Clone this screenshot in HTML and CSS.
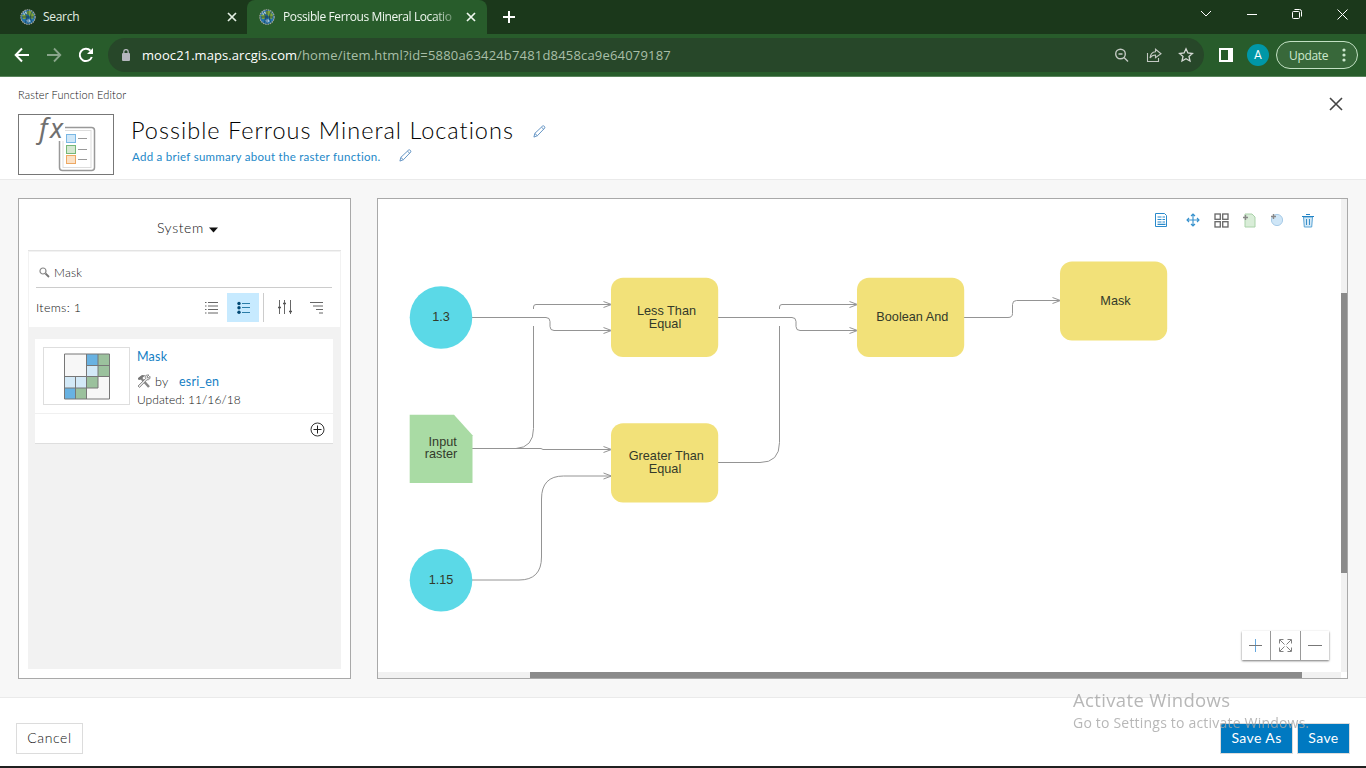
FILE: index.html
```html
<!DOCTYPE html>
<html lang="en">
<head>
<meta charset="utf-8">
<title>Possible Ferrous Mineral Locations</title>
<link rel="stylesheet" href="styles.css">
</head>
<body>
<svg class="defs" width="0" height="0">
  <symbol id="globe" viewBox="0 0 16 16">
    <circle cx="8" cy="8" r="7.2" fill="#2474ad" stroke="#a9a9a3" stroke-width="1.1" stroke-dasharray="1.6 .7"/>
    <path d="M7 2l4 0 3 4-1 4-3-1-1-3-3-1zM2 6l3-1 2 3-2 2-2 0z" fill="#7fa43a"/>
    <path d="M3 3.5l3-1 1 2-3 1.500zM6 11l3-1 2 2-3 2z" fill="#a5cbe4"/>
    <path d="M2 8h12M8 1v14M4 3c3 3 3 8 1 11M12 3c-2 3-2 8 0 10" stroke="#16384c" stroke-width=".7" fill="none"/>
  </symbol>
  <symbol id="cross" viewBox="0 0 10 10"><path d="M1 1l8 8M9 1l-8 8" stroke="currentColor" stroke-width="1.700" fill="none"/></symbol>
  <symbol id="pencil" viewBox="0 0 14 14"><path d="M1 13l1-4L10.500 1c1-.6 2.800 1 2.200 2.200L4.800 11.500zM2 9.200l2.700 2.300M9.200 2.400l2.500 2.400" fill="none" stroke="#5b8ec0" stroke-width="1"/></symbol>
</svg>

<header class="tabs">
  <div class="tab tab-search"><svg class="globe"><use href="#globe"/></svg><span class="tab-title w-search">Search</span><svg class="tab-close"><use href="#cross"/></svg></div>
  <div class="tab tab-active"><svg class="globe"><use href="#globe"/></svg><span class="tab-title fade">Possible Ferrous Mineral Locatio</span><svg class="tab-close"><use href="#cross"/></svg></div>
  <svg class="new-tab" viewBox="0 0 12 12"><path d="M6 0v12M0 6h12" stroke="#fff" stroke-width="2"/></svg>
  <div class="window-buttons">
    <svg width="12" height="8" viewBox="0 0 12 8"><path d="M1 1l5 5 5-5" fill="none" stroke="#fff"/></svg>
    <svg width="10" height="10" viewBox="0 0 10 10"><path d="M0 5.500h10" stroke="#fff"/></svg>
    <svg width="10" height="10" viewBox="0 0 10 10"><rect x=".5" y="2.500" width="7" height="7" rx="1" fill="none" stroke="#fff"/><path d="M2.500.5h5a2 2 0 0 1 2 2v5" fill="none" stroke="#fff"/></svg>
    <svg width="11" height="11" viewBox="0 0 11 11"><path d="M.5.5l10 10M10.500.5l-10 10" stroke="#fff"/></svg>
  </div>
</header>

<nav class="toolbar">
  <svg class="nav-icon" viewBox="0 0 16 16"><path d="M15 8H2M8 1.500L1.700 8 8 14.500" fill="none" stroke="#fff" stroke-width="2"/></svg>
  <svg class="nav-icon dim" viewBox="0 0 16 16"><path d="M1 8h13M8 1.500L14.300 8 8 14.500" fill="none" stroke="#fff" stroke-width="1.800"/></svg>
  <svg class="nav-icon" viewBox="0 0 16 16"><path d="M13.800 10A6.200 6.200 0 1 1 12.500 3.600" fill="none" stroke="#fff" stroke-width="2"/><path d="M15 1v6H9z" fill="#fff"/></svg>
  <div class="address">
    <svg class="lock" viewBox="0 0 10 12"><rect x="1" y="4" width="8" height="8" rx="1" fill="#b5b7bd"/><path d="M2.800 4V2.800a2.200 2.200 0 0 1 4.400 0V4" fill="none" stroke="#b5b7bd" stroke-width="1.300"/></svg>
    <div class="url"><span class="host">mooc21.maps.arcgis.com</span><span class="path">/home/item.html?id=5880a63424b7481d8458ca9e64079187</span></div>
    <div class="address-icons">
      <svg width="16" height="16" viewBox="0 0 16 16"><g fill="none" stroke="#c3c9c3" stroke-width="1.400"><circle cx="6.500" cy="7" r="4.800"/><path d="M10 10.500l4 4M4.500 7h4"/></g></svg>
      <svg width="16" height="16" viewBox="0 0 16 16"><path d="M1.500 6v8.500h11V11M9.500 2.200L15 6.700l-5.500 4V8C7 8 5.200 9 4 11c.3-3.800 2.200-6 5.500-6.300z" fill="none" stroke="#c3c9c3" stroke-width="1.100"/></svg>
      <svg width="16" height="16" viewBox="0 0 16 16"><path d="M8 1.800l1.900 4.200 4.500.5-3.400 3 1 4.500L8 11.700 4 14l1-4.500-3.400-3L6.100 6z" fill="none" stroke="#d5d9d5" stroke-width="1.300"/></svg>
    </div>
  </div>
  <svg class="side-icon" viewBox="0 0 14 14"><path d="M0 0h14v14H0zM2 2v10h7V2z" fill="#fff" fill-rule="evenodd"/></svg>
  <div class="avatar">A</div>
  <div class="update"><span>Update</span><svg width="4" height="14" viewBox="0 0 4 14"><g fill="#cde8ce"><circle cx="2" cy="2" r="1.600"/><circle cx="2" cy="7" r="1.600"/><circle cx="2" cy="12" r="1.600"/></g></svg></div>
</nav>

<section class="item-header">
  <div class="item-main">
    <div class="crumb"><span>Raster Function Editor</span></div>
    <div class="item-row">
      <div class="thumb">
        <svg class="thumb-art" width="94" height="59" viewBox="0 0 94 59">
          <rect x="40.500" y="12.500" width="35" height="43" rx="3" fill="#fff" stroke="#999" stroke-width="1.500"/>
          <rect x="44" y="15.500" width="28" height="37" fill="#fff" stroke="#ddd"/>
          <path d="M18 0h28v26H18z" fill="#fff"/>
          <text class="fx" x="20" y="23">f<tspan x="31">x</tspan></text>
          <rect x="47.500" y="19.500" width="9" height="8" fill="#cfe7f8" stroke="#79b7e4"/>
          <rect x="47.500" y="30.500" width="9" height="8" fill="#d4e8d1" stroke="#76b777"/>
          <rect x="47.500" y="40.500" width="9" height="8" fill="#fbe1c5" stroke="#eda863"/>
          <path d="M59 23.500h9M59 34.500h9M59 44.500h9" stroke="#999"/>
        </svg>
      </div>
      <div class="item-text">
        <div class="title-row"><h1><span>Possible Ferrous Mineral Locations</span></h1><svg class="pencil"><use href="#pencil"/></svg></div>
        <div class="summary-row"><a>Add a brief summary about the raster function.</a><svg class="pencil"><use href="#pencil"/></svg></div>
      </div>
    </div>
  </div>
  <svg class="close-item" viewBox="0 0 14 14"><path d="M1 1l12 12M13 1L1 13" stroke="#444" stroke-width="1.600"/></svg>
</section>

<main class="workspace">
  <aside class="panel">
    <div class="source"><span>System</span><svg width="9" height="6" viewBox="0 0 9 6"><path d="M0 .5h9L4.500 5.500z" fill="#111"/></svg></div>
    <div class="browser">
      <div class="filters">
        <div class="search"><svg width="11" height="11" viewBox="0 0 11 11"><circle cx="4" cy="4" r="3" fill="none" stroke="#888" stroke-width="1.200"/><path d="M6.500 6.500l3.500 3.500" stroke="#777" stroke-width="1.800"/></svg><span>Mask</span></div>
        <div class="tools">
          <span class="count">Items: 1</span>
          <svg class="list-icon" width="13" height="13" viewBox="0 0 13 13"><path d="M0 1.500h1.500M3 1.500h10M0 5h1.500M3 5h10M0 8.500h1.500M3 8.500h10M0 12h1.500M3 12h10" stroke="#666" stroke-width="1.100"/></svg>
          <div class="view-on"><svg width="13" height="13" viewBox="0 0 13 13"><path d="M5 2.500h8M5 6.500h8M5 11.500h8" stroke="#2b7da8"/><g fill="#004874"><circle cx="2" cy="2.500" r="1.700"/><circle cx="2" cy="6.800" r="1.700"/><circle cx="2" cy="11.300" r="1.700"/></g></svg></div>
          <div class="sorting">
            <svg width="14" height="14" viewBox="0 0 14 14"><path d="M1.500 0v14M6.500 0v14M12.500 0v14" stroke="#666"/><path d="M0 7.500h3M5 3.500h3M11 11.500h3" stroke="#555" stroke-width="1.500"/></svg>
            <svg width="13" height="13" viewBox="0 0 13 13"><path d="M0 1.500h13M3 5h10M6 8.500h7M9 12h4" stroke="#666" stroke-width="1.100"/></svg>
          </div>
        </div>
      </div>
      <article class="card">
        <div class="card-body">
          <div class="card-thumb">
            <svg width="46" height="47" viewBox="0 0 46 47">
              <path d="M.5 1h45v45H.5z" fill="#f7f7f7"/><path d="M23 1h11v11H23zM1 35h11v11H1z" fill="#68b2e2"/><path d="M34 1h11v22H34zM23 23h11v12H23zM12 35h11v11H12z" fill="#9bc19d"/><path d="M23 12h11v11H23zM1 23h22v12H1z" fill="#d3e9f7"/>
              <path d="M.5 1h45v45H.5zM22.500 1v45M34 1v34M11.500 23.500V46M22.500 12.500h23M.5 23.500h45M.5 35H34" fill="none" stroke="#777"/>
            </svg>
          </div>
          <div class="card-text">
            <a class="c1">Mask</a>
            <div class="by-row"><svg width="14" height="14" viewBox="0 0 14 14"><path d="M3 3l9 10" stroke="#888" stroke-width="2.500"/><path d="M1 4l4-3 4 .5-2 1L3 6 1 5.500z" fill="#777"/><path d="M12 1c-4-.5-4 2-3.500 3.500L1 12l1.500 1.500L10 5.800c2 .3 3.500-1 3-3.500L11 4.200 10 3z" fill="#e4e4e4" stroke="#777" stroke-width=".8"/></svg><span class="by">by</span><a class="author">esri_en</a></div>
            <span class="updated">Updated: 11/16/18</span>
          </div>
        </div>
        <div class="card-foot"><svg width="15" height="15" viewBox="0 0 15 15"><circle cx="7.500" cy="7.500" r="6.500" fill="none" stroke="#333"/><path d="M7.500 3.500v8M3.500 7.500h8" stroke="#222"/></svg></div>
      </article>
    </div>
  </aside>

  <section class="canvas">
    <div class="stage">
      <svg class="diagram" width="963" height="473" viewBox="378 199 963 473">
        <g class="links">
          <path d="M472 317.500h74q4 0 4 4v5q0 4 4 4h56"/>
          <path d="M533.500 309v-2q0-2.500 2.500-2.500h74"/>
          <path d="M472 448.500h44q17.500-1 17.500-20V326"/>
          <path d="M472 448.500h69l2 1h67"/>
          <path d="M472 580h47q22.500 0 22.500-23v-58q0-23 22-23h47"/>
          <path d="M718 317.500h74q4 0 4 4v5q0 4 4 4h56"/>
          <path d="M779.500 309v-2q0-2.500 2.500-2.500h74"/>
          <path d="M718 462.500h42q19.500 0 19.500-20V326"/>
          <path d="M964 317.500h44q4.500 0 4.500-4v-9q0-4 4-4h43"/>
          <path d="M603.500 301.500l8 3-8 3M603.500 327.500l8 3-8 3M603.500 446.500l8 3-8 3M603.500 473l8 3-8 3M849.500 301.500l8 3-8 3M849.500 327.500l8 3-8 3M1052.500 297.500l8 3-8 3"/>
        </g>
        <circle cx="441" cy="317.500" r="31.300" fill="#5bd9e7"/><circle cx="441" cy="580.300" r="31.300" fill="#5bd9e7"/>
        <path d="M409.700 414.700h44.300l18.500 20.500v47.800h-62.800z" fill="#a9dba4"/>
        <g fill="#f2e179">
          <rect x="611" y="277.800" width="107.200" height="79.200" rx="12"/><rect x="611" y="423.200" width="107.200" height="79.200" rx="12"/>
          <rect x="857" y="277.800" width="107.200" height="79.200" rx="12"/><rect x="1060" y="261.400" width="107.200" height="79.200" rx="12"/>
        </g>
        <g class="labels">
          <text x="441" y="321">1.3</text><text x="441" y="584">1.15</text>
          <text x="442.700" y="446">Input</text><text x="441" y="458">raster</text>
          <text x="666.500" y="314.500">Less Than</text><text x="665" y="328">Equal</text>
          <text x="666.300" y="460">Greater Than</text><text x="665" y="473">Equal</text>
          <text x="912.300" y="321">Boolean And</text><text x="1115.500" y="304.500">Mask</text>
        </g>
      </svg>
      <div class="actions">
        <svg width="14" height="16" viewBox="0 0 14 16"><path d="M1.500 1.500h9l2 2v11h-11z" fill="#fff" stroke="#2a8acb"/><path d="M3.500 5h4M3.500 7.500h4M3.500 10h4M3.500 12.300h8M8.500 5H11M8.500 7.500H11M8.500 10H11" stroke="#2a8acb" stroke-width="1.200"/></svg>
        <svg class="move" width="14" height="14" viewBox="0 0 14 14"><path d="M7 1v12M1 7h12M5 3l2-2 2 2M5 11l2 2 2-2M3 5L1 7l2 2M11 5l2 2-2 2" fill="none" stroke="#3691cd" stroke-width="1.100"/></svg>
        <svg width="15" height="15" viewBox="0 0 15 15"><g fill="#fff" stroke="#666" stroke-width="1.300"><rect x="1" y="1" width="5.300" height="5.300"/><rect x="8.700" y="1" width="5.300" height="5.300"/><rect x="1" y="8.700" width="5.300" height="5.300"/><rect x="8.700" y="8.700" width="5.300" height="5.300"/></g></svg>
        <svg width="13" height="15" viewBox="0 0 13 15"><path d="M2 1h7l3 3v10H2z" fill="#d9edd8" stroke="#aad2a9"/><path d="M0 4.500h5M2.500 2v5" stroke="#888" stroke-width="1.400"/></svg>
        <svg width="14" height="14" viewBox="0 0 14 14"><circle cx="7" cy="7" r="5.600" fill="#cfe6f7" stroke="#a8cbe7"/><path d="M1 3.500h5M3.500 1v5" stroke="#888" stroke-width="1.400"/></svg>
        <svg class="trash" width="14" height="15" viewBox="0 0 14 15"><path d="M2.500 4h9l-.8 10H3.300z" fill="#d5e9f6" stroke="#5aa5d6"/><path d="M1 3.500h12M5 1.500h4" stroke="#2283c5" stroke-width="1.200"/><path d="M5.500 6v6M8.500 6v6" stroke="#3a8fc9"/></svg>
      </div>
      <div class="zoom">
        <span><svg width="14" height="14" viewBox="0 0 14 14"><path d="M6.500 0v13" stroke="#65a8df"/><path d="M0 6.500h13" stroke="#777"/></svg></span>
        <span><svg width="13" height="13" viewBox="0 0 13 13"><path d="M5.500 5.500L1 1M4.500.5h-4v4M7.500 5.500L12 1M8.500.5h4v4M5.500 7.500L1 12M4.500 12.500h-4v-4M7.500 7.500L12 12M8.500 12.500h4v-4" fill="none" stroke="#808080"/></svg></span>
        <span><svg width="14" height="14" viewBox="0 0 14 14"><path d="M0 6.500h14" stroke="#777"/></svg></span>
      </div>
    </div>
    <div class="v-track"><div class="v-thumb"></div></div>
    <div class="h-track"><div class="h-thumb"></div></div>
  </section>
</main>

<footer class="footer">
  <button class="cancel"><span>Cancel</span></button>
  <div class="save-group"><button class="save-as"><span>Save As</span></button><button class="save"><span>Save</span></button></div>
</footer>
<div class="watermark"><div class="wm-title">Activate Windows</div><div class="wm-sub">Go to Settings to activate Windows.</div></div>
</body>
</html>
```
FILE: styles.css
```css
* { box-sizing: border-box; }
body { margin: 0; width: 1366px; height: 768px; overflow: hidden; display: flex; flex-direction: column; background: #fff; font-family: Lato, "Open Sans", sans-serif; font-weight: 300; color: #111; position: relative; border-bottom: 2px solid #202020; }
svg { display: block; flex: none; }
.defs { position: absolute; }
h1 { margin: 0; }
button { margin: 0; padding: 0 0 2px; font-family: inherit; font-weight: inherit; }

.tabs, .toolbar, .watermark { font-family: "Open Sans", "Noto Sans", sans-serif; font-weight: 400; }
.tabs { height: 34px; flex: none; background: #1b381b; display: flex; align-items: center; color: #fff; }
.tab { display: flex; align-items: center; height: 34px; font-size: 12px; }
.tab-search { width: 247px; padding-left: 20px; color: #e4efe4; }
.tab-active { width: 240px; padding-left: 12px; background: #285c2b; border-radius: 8px 8px 0 0; color: #f0f8f0; }
.globe { width: 16px; height: 16px; }
.tab-title { margin-left: 7px; width: 185px; white-space: nowrap; line-height: 20px; letter-spacing: -.3px; }
.tab-title.fade { width: 174px; margin-left: 8px; letter-spacing: -.4px; mask-image: linear-gradient(90deg, #000 86%, rgba(0, 0, 0, .2)); }
.tab-close { width: 10px; height: 10px; margin-left: auto; margin-right: 10px; }
.tab-active .tab-close { margin-right: 11px; }
.new-tab { width: 12px; height: 12px; margin-left: 16px; }
.window-buttons { margin-left: auto; margin-right: 18px; margin-bottom: 6px; display: flex; align-items: center; gap: 35px; }

.toolbar { height: 43px; flex: none; background: #285c2b; border-bottom: 1px solid #5a855c; display: flex; align-items: center; padding-left: 14px; }
.nav-icon { width: 16px; height: 16px; margin-right: 16px; }
.dim { opacity: .45; }
.address { width: 1096px; height: 34px; margin-left: -2px; padding-left: 12px; border-radius: 17px; background: #274729; display: flex; align-items: center; }
.lock { width: 10px; height: 12px; margin-left: 1px; }
.url { margin-left: 11px; font-size: 13px; display: flex; white-space: nowrap; }
.host { width: 155px; color: #fff; letter-spacing: .06px; }
.path { color: #a9bfa8; letter-spacing: .18px; }
.address-icons { margin-left: auto; margin-right: 10px; display: flex; gap: 16px; }
.side-icon { width: 14px; height: 14px; margin-left: 15px; }
.avatar { width: 22px; height: 22px; margin-left: 14px; border-radius: 50%; background: #0097a7; color: #fff; font: 12px/22px Roboto, sans-serif; text-align: center; }
.update { width: 82px; height: 28px; margin-left: 7px; border: 1px solid #c3e1c4; border-radius: 14px; background: #38683a; color: #cde8ce; font-size: 12px; letter-spacing: -.35px; display: flex; align-items: center; padding-left: 12px; gap: 14px; }

.item-header { height: 103px; flex: none; border-bottom: 1px solid #eaeaea; display: flex; justify-content: space-between; padding: 11px 23px 0 18px; }
.crumb { height: 15px; font-size: 11px; line-height: 14px; letter-spacing: .12px; white-space: nowrap; }
.item-row { display: flex; margin-top: 11px; }
.thumb { width: 96px; height: 61px; border: 1px solid #777; background: #fff; }
.thumb-art { overflow: visible; }
.fx { font: italic 27px "Noto Sans", sans-serif; fill: #707070; }
.item-text { margin-left: 18px; white-space: nowrap; }
.title-row { display: flex; align-items: center; height: 34px; }
h1 { font-size: 23.500px; line-height: 32px; margin: -2px 0 0 -1px; width: 402px; letter-spacing: 1px; color: #000; font-weight: 300; }
.summary-row { display: flex; align-items: center; height: 16px; font-size: 11.500px; letter-spacing: .28px; font-weight: 400; }
.summary-row a { width: 267px; color: #2388c8; }
.summary-row .pencil { margin-top: -2px; }
.pencil { width: 13px; height: 13px; margin-top: 1px; }
.close-item { width: 14px; height: 14px; margin-top: 9px; }

.workspace { height: 517px; flex: none; background: #f7f7f7; display: flex; gap: 26px; padding: 18px 18px 18px; }
.panel { width: 333px; height: 481px; background: #fff; border: 1px solid #a9a9a9; padding: 0 9px 9px; display: flex; flex-direction: column; }
.source { height: 51px; padding: 6px 0 0 6px; display: flex; align-items: center; justify-content: center; gap: 5px; font-size: 14px; letter-spacing: .6px; }
.source svg { margin-top: 5px; }
.browser { flex: 1; background: #f2f2f2; border-top: 1px solid #e3e3e3; padding: 1px 1px 0; }
.filters { height: 75px; background: #fff; padding: 0 8px 0 7px; }
.search { height: 36px; border-bottom: 1px solid #ccc; display: flex; align-items: center; padding: 6px 0 0 3px; gap: 4px; font-size: 12px; letter-spacing: .2px; }
.tools { display: flex; align-items: center; height: 38px; }
.count { width: 169px; font-size: 12.500px; letter-spacing: .3px; }
.view-on { width: 32px; height: 29px; background: #c7eaff; display: flex; align-items: center; justify-content: center; margin-left: 9px; }
.sorting { height: 29px; border-left: 1px solid #ccc; margin-left: 4px; padding-left: 14px; display: flex; align-items: center; gap: 18px; }
.card { width: 298px; height: 105px; margin: 12px 0 0 6px; background: #fff; border-bottom: 1px solid #dedede; }
.card-body { height: 75px; border-bottom: 1px solid #f0f0f0; display: flex; padding: 8px; }
.card-thumb { width: 87px; height: 58px; border: 1px solid #dedede; display: flex; align-items: center; justify-content: center; }
.card-text { margin-left: 7px; display: flex; flex-direction: column; font-size: 12.500px; letter-spacing: .3px; white-space: nowrap; }
.card-text > * { flex: none; }
.card a { color: #1480c4; font-weight: 400; letter-spacing: .2px; }
.c1 { height: 25px; line-height: 19px; }
.by-row { display: flex; height: 18px; align-items: center; }
.by { margin-left: 4px; width: 24px; }
.updated { line-height: 19px; font-size: 12px; letter-spacing: .05px; }
.card-foot { height: 30px; display: flex; align-items: center; justify-content: flex-end; padding-right: 8px; }

.canvas { width: 972px; height: 481px; border: 1px solid #a9a9a9; background: #fff; display: grid; grid-template-columns: 963px 6px; grid-template-rows: 473px 6px; }
.stage { position: relative; }
.links { fill: none; stroke: #949494; stroke-width: 1; }
.labels { font-family: "Liberation Sans", Arial, sans-serif; font-weight: 400; font-size: 12.700px; fill: #333a2a; text-anchor: middle; }
.actions { position: absolute; top: 13px; right: 26px; height: 16px; display: flex; align-items: center; gap: 14px; }
.actions .move { margin: 0 0 0 4px; }
.actions .trash { margin-left: 3px; }
.zoom { position: absolute; right: 12px; bottom: 12px; height: 29px; display: flex; background: #fff; box-shadow: 0 1px 2px #777; }
.zoom span { width: 29px; display: flex; align-items: center; justify-content: center; }
.zoom span:first-child { width: 28px; }
.zoom span:nth-child(2) { width: 30px; }
.zoom span + span { border-left: 1px solid #999; }
.v-track, .h-track { background: #f1f1f1; }
.v-thumb { height: 280px; margin-top: 94px; background: #8a8a8a; }
.h-thumb { width: 772px; height: 6px; margin-left: 152px; background: #8a8a8a; }

.footer { flex: 1; border-top: 1px solid #eaeaea; display: flex; justify-content: space-between; padding: 25px 16px 0; }
.cancel { width: 67px; height: 31px; border: 1px solid #dcdcdc; background: #fff; color: #111; font-size: 14px; letter-spacing: .6px; }
.save-group { display: flex; gap: 4px; }
.save-as, .save { height: 31px; border: 1px solid #dcdcdc; background: #0079c1; color: #fff; font-size: 14px; font-weight: 400; letter-spacing: .4px; }
.save-as { width: 73px; }
.save { width: 53px; }
.watermark { position: absolute; left: 1073px; top: 687px; color: #a6a6a6; opacity: .8; white-space: nowrap; pointer-events: none; }
.wm-title { font-size: 18.500px; line-height: 25px; letter-spacing: .35px; }
.wm-sub { font-size: 14px; line-height: 21px; letter-spacing: .2px; }
```
